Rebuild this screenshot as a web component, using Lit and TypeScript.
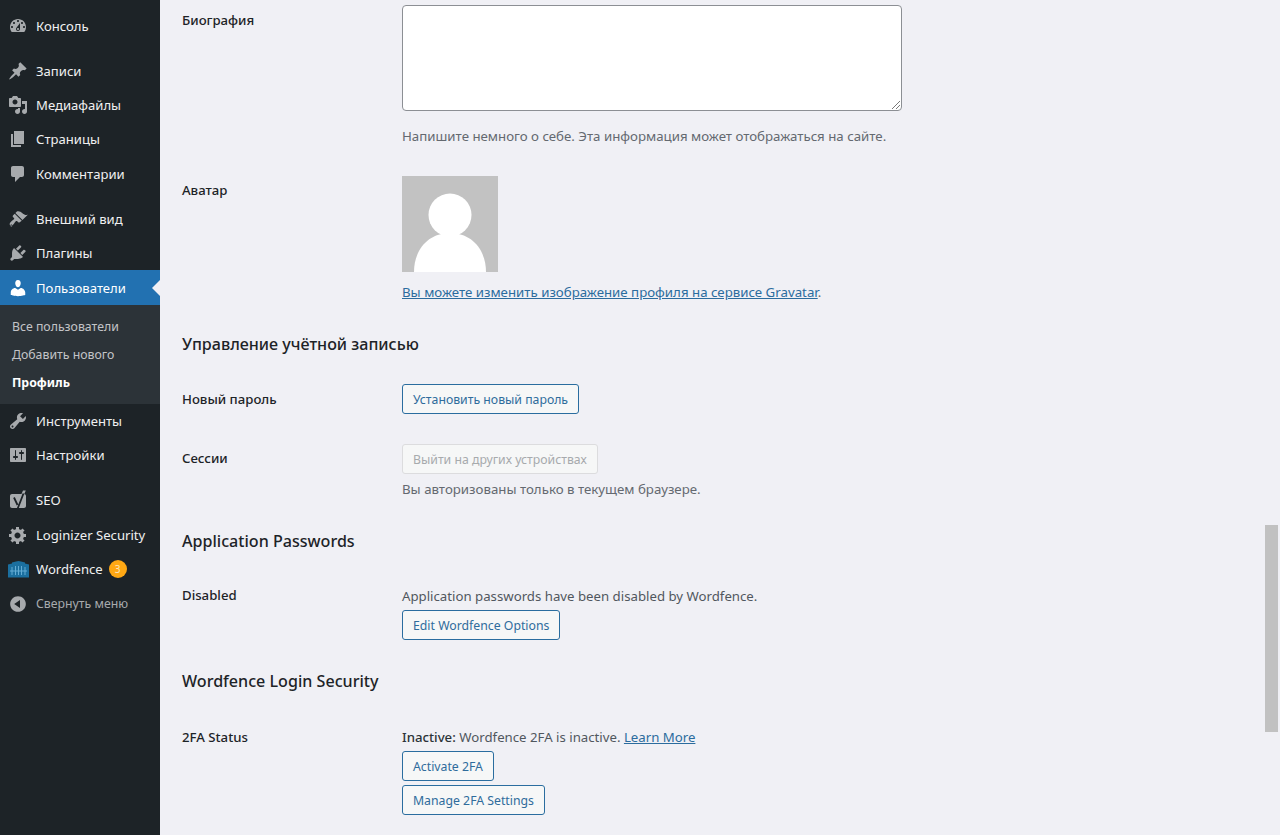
import { LitElement, html, css, svg } from "lit";
import { customElement } from "lit/decorators.js";

const ICONS: Record<string, any> = {
  dashboard: svg`<path d="M3.76 16h12.48c1.1-1.37 1.76-3.11 1.76-5 0-4.42-3.58-8-8-8s-8 3.58-8 8c0 1.89.66 3.63 1.76 5zM10 4c.55 0 1 .45 1 1s-.45 1-1 1-1-.45-1-1 .45-1 1-1zM6 6c.55 0 1 .45 1 1s-.45 1-1 1-1-.45-1-1 .45-1 1-1zm8 0c.55 0 1 .45 1 1s-.45 1-1 1-1-.45-1-1 .45-1 1-1zm-5.37 5.55L12 7v6c0 1.1-.9 2-2 2s-2-.9-2-2c0-.57.24-1.08.63-1.45zM4 10c.55 0 1 .45 1 1s-.45 1-1 1-1-.45-1-1 .45-1 1-1zm12 0c.55 0 1 .45 1 1s-.45 1-1 1-1-.45-1-1 .45-1 1-1zm-5 3c0-.55-.45-1-1-1s-1 .45-1 1 .45 1 1 1 1-.45 1-1z"/>`,
  post: svg`<path d="M10.44 3.02l1.82-1.82 6.36 6.35-1.83 1.82c-1.05-.68-2.48-.57-3.41.36l-.75.75c-.92.93-1.04 2.35-.35 3.41l-1.83 1.82-2.41-2.41-2.8 2.79c-.42.42-3.38 2.71-3.8 2.29s1.86-3.39 2.28-3.81l2.79-2.79L4.1 9.36l1.83-1.82c1.05.69 2.48.57 3.4-.36l.75-.75c.93-.92 1.05-2.35.36-3.41z"/>`,
  media: svg`<path d="M13 11V4c0-.55-.45-1-1-1h-1.67L9 1H5L3.67 3H2c-.55 0-1 .45-1 1v7c0 .55.45 1 1 1h10c.55 0 1-.45 1-1zM7 4.5c1.38 0 2.5 1.12 2.5 2.5S8.38 9.5 7 9.5 4.5 8.38 4.5 7 5.62 4.5 7 4.5zM14 6h5v10.5c0 1.38-1.12 2.5-2.5 2.5S14 17.88 14 16.5s1.12-2.5 2.5-2.5c.17 0 .34.02.5.05V9h-3V6zm-4 8.05V13h2v3.5c0 1.38-1.12 2.5-2.5 2.5S7 17.88 7 16.5 8.12 14 9.5 14c.17 0 .34.02.5.05z"/>`,
  page: svg`<path d="M6 15V2h10v13H6zm-1 1h8v2H3V5h2v11z"/>`,
  comments: svg`<path d="M5 2h9c1.1 0 2 .9 2 2v7c0 1.1-.9 2-2 2h-2l-5 5v-5H5c-1.1 0-2-.9-2-2V4c0-1.1.9-2 2-2z"/>`,
  appearance: svg`<path d="M14.48 11.06L7.41 3.99l1.5-1.5c.5-.56 2.3-.47 3.51.32 1.21.8 1.43 1.28 2.91 2.1 1.18.64 2.45 1.26 4.45.85zM13.77 11.77 6.7 4.7 4.93 6.47c-.39.39-.39 1.02 0 1.41l1.06 1.06c.39.39.39 1.03 0 1.42-.6.6-1.43 1.11-2.21 1.69-.35.26-.7.53-1.01.84-1.43 1.43-1.4 2.52-.71 3.21.69.69 1.78.72 3.21-.71.31-.31.58-.66.84-1.01.58-.78 1.09-1.61 1.69-2.21.39-.39 1.03-.39 1.42 0l1.06 1.06c.39.39 1.02.39 1.41 0zm-9.72 5.37c-.39.39-1.02.39-1.41 0-.39-.39-.39-1.03 0-1.42.39-.39 1.02-.39 1.41 0 .39.39.39 1.03 0 1.42z"/>`,
  plugins: svg`<path d="M13.11 4.36L9.87 7.6 8 5.73l3.24-3.24c.35-.34 1.05-.2 1.56.32.52.51.66 1.21.31 1.55zm-8 1.77l.91-1.12 9.01 9.01-1.19.84c-.71.71-2.63 1.16-3.82 1.16H6.14L4.9 17.26c-.59.59-1.54.59-2.12 0-.59-.58-.59-1.53 0-2.12l1.24-1.24v-3.88c0-1.13.4-3.19 1.09-3.89zm7.26 3.97l3.24-3.24c.34-.35 1.04-.21 1.55.31.52.51.66 1.21.31 1.55l-3.24 3.25z"/>`,
  users: svg`<path d="M10 9.25c-2.27 0-2.73-3.44-2.73-3.44C7 4.02 7.82 2 9.97 2c2.16 0 2.98 2.02 2.71 3.81 0 0-.41 3.44-2.68 3.44zm0 2.57L12.72 10c2.39 0 4.52 2.33 4.52 4.53v2.49s-3.65 1.13-7.24 1.13c-3.65 0-7.24-1.13-7.24-1.13v-2.49c0-2.25 1.94-4.48 4.47-4.48z"/>`,
  tools: svg`<path d="M16.68 9.77c-1.34 1.34-3.3 1.67-4.95.99l-5.41 6.52c-.99.99-2.59.99-3.58 0s-.99-2.59 0-3.57l6.52-5.42c-.68-1.65-.35-3.61.99-4.95 1.28-1.28 3.12-1.62 4.72-1.06l-2.89 2.89 2.82 2.82 2.86-2.87c.53 1.58.18 3.39-1.08 4.65zM3.81 16.21c.4.39 1.04.39 1.43 0 .4-.4.4-1.04 0-1.43-.39-.4-1.03-.4-1.43 0-.39.39-.39 1.03 0 1.43z"/>`,
  settings: svg`<path d="M18 16V4c0-.55-.45-1-1-1H3c-.55 0-1 .45-1 1v12c0 .55.45 1 1 1h14c.55 0 1-.45 1-1zM8 11h1c.55 0 1 .45 1 1s-.45 1-1 1H8v1.5c0 .28-.22.5-.5.5s-.5-.22-.5-.5V13H6c-.55 0-1-.45-1-1s.45-1 1-1h1V5.5c0-.28.22-.5.5-.5s.5.22.5.5V11zm5-2h-1c-.55 0-1-.45-1-1s.45-1 1-1h1V5.5c0-.28.22-.5.5-.5s.5.22.5.5V7h1c.55 0 1 .45 1 1s-.45 1-1 1h-1v5.5c0 .28-.22.5-.5.5s-.5-.22-.5-.5V9z"/>`,
  seo: svg`<path d="M4 4h12c1.100 0 2 .9 2 2v10c0 1.100-.9 2-2 2H4c-1.100 0-2-.9-2-2V6c0-1.100.9-2 2-2zM13.500 4 15 .5h2.800L16.300 4z"/>
    <path d="M6 7.500 9.500 15M15.500 3.500 9.500 19" stroke="#1d2327" stroke-width="1.800" fill="none"/>`,
  gear: svg`<path d="M18 12h-2.180c-.17.7-.44 1.350-.81 1.930l1.540 1.540-2.100 2.100-1.540-1.540c-.58.36-1.230.63-1.910.79V19H8v-2.180c-.68-.16-1.330-.43-1.910-.79l-1.540 1.540-2.120-2.120 1.540-1.540c-.36-.58-.63-1.230-.79-1.910H1V9.030h2.170c.16-.7.44-1.350.8-1.940L2.430 5.550l2.100-2.100 1.540 1.540c.58-.37 1.240-.64 1.930-.81V2h3v2.180c.68.16 1.330.43 1.910.79l1.540-1.540 2.120 2.120-1.540 1.540c.36.59.64 1.240.8 1.940H18V12zm-8.500 1.500c1.660 0 3-1.340 3-3s-1.340-3-3-3-3 1.340-3 3 1.340 3 3 3z"/>`,
  collapse: svg`<path d="M10 2.160c4.330 0 7.840 3.510 7.840 7.840s-3.510 7.840-7.840 7.840S2.160 14.330 2.160 10 5.710 2.160 10 2.160zm2 11.720V6.120L6.180 9.970z"/>`,
};

interface Item { label: string; icon: string; sep?: boolean; active?: boolean; cls?: string; badge?: string; }

const MENU: Item[] = [
  { label: "Консоль", icon: "dashboard", sep: true },
  { label: "Записи", icon: "post" },
  { label: "Медиафайлы", icon: "media" },
  { label: "Страницы", icon: "page" },
  { label: "Комментарии", icon: "comments", sep: true },
  { label: "Внешний вид", icon: "appearance" },
  { label: "Плагины", icon: "plugins" },
  { label: "Пользователи", icon: "users", active: true },
  { label: "Инструменты", icon: "tools" },
  { label: "Настройки", icon: "settings", sep: true },
  { label: "SEO", icon: "seo" },
  { label: "Loginizer Security", icon: "gear" },
  { label: "Wordfence", icon: "wordfence", badge: "3" },
  { label: "Свернуть меню", icon: "collapse", cls: "collapse" },
];

@customElement("app-root")
export class AppRoot extends LitElement {
  static styles = css`
    :host {
      display: block;
      height: 835px;
      overflow: hidden;
      background: #f0f0f5;
      font-family: "Noto Sans", "Open Sans", sans-serif;
      font-size: 13px;
      color: #3c434a;
    }
    .page { display: flex; height: 835px; position: relative; }
    .side { width: 160px; flex: none; background: #1d2327; padding-top: 8.4px; box-sizing: border-box; }
    .item {
      height: 34.4px; display: flex; align-items: center; color: #f0f0f1;
      padding-left: 8px; position: relative; font-size: 13.1px; box-sizing: border-box;
    }
    .item svg { width: 20px; height: 20px; fill: #a7aaad; flex: none; margin-right: 8px; }
    .item svg.wf { fill: #1b6f9f; width: 21px; margin-left: 0; margin-right: 7px; }
    .item.sep { margin-bottom: 10.6px; }
    .item.active { background: #2271b1; color: #fff; }
    .item.active svg { fill: #fff; }
    .item.active::after {
      content: ""; position: absolute; right: 0; top: 50%; margin-top: -8px;
      border: 8px solid transparent; border-right-color: #f0f0f5; border-left-width: 0;
    }
    .item.collapse { color: #a7aaad; font-size: 12.3px; }
    .badge {
      width: 18px; height: 18px; border-radius: 50%; background: #ffa814; color: #fbe6bd;
      font-size: 10px; display: flex; align-items: center; justify-content: center; margin-left: 6px;
    }
    .sub { background: #2c3338; padding: 8px 0 7px; height: 99.2px; box-sizing: border-box; }
    .sub div { height: 28px; line-height: 28px; padding-left: 12px; font-size: 12.3px; color: #c3c4c7; }
    .sub div.cur { color: #fff; font-weight: 700; }

    .main { flex: 1; padding: 5px 0 0 22px; min-width: 0; }
    .row { display: flex; }
    .label { width: 220px; flex: none; font-weight: 500; font-size: 13.2px; color: #1d2327; }
    .desc { color: #646970; line-height: 18px; font-size: 13.27px; }
    .bio { padding-bottom: 31px; }
    .bio .label { padding-top: 6px; line-height: 18px; }
    .ta {
      width: 500px; height: 106px; box-sizing: border-box; background: #fff;
      border: 1px solid #8c8f94; border-radius: 4px; position: relative; margin-bottom: 16px;
    }
    .grip { position: absolute; right: 0; bottom: 0; width: 11px; height: 11px; }
    .avatar-row { height: 131px; }
    .avatar-row .label { padding-top: 5px; line-height: 18px; }
    .avatar { display: block; width: 96px; height: 96px; margin-bottom: 11px; }
    a { color: #2b6c9e; text-decoration: underline; }
    h2 { font-size: 16.1px; font-weight: 500; color: #1d2327; margin: 0; line-height: 22px; }
    .btn {
      display: inline-flex; align-items: center; height: 30px; box-sizing: border-box; padding: 0 10px;
      border: 1px solid #2a6d9f; border-radius: 3px; color: #2f6c9c; background: #f6f7f7; font-size: 12.28px; white-space: nowrap;
    }
    .btn.off { border-color: #dcdcde; color: #a7aaad; background: #f6f7f7; }
    .stack { display: flex; flex-direction: column; align-items: flex-start; }
    .h-acc { margin-top: 26px; }
    .r-pass { margin-top: 29px; align-items: center; height: 30px; }
    .r-sess { margin-top: 30px; }
    .r-sess .label { padding-top: 5px; line-height: 18px; }
    .r-sess .desc { margin-top: 6px; }
    .h-app { margin-top: 32px; }
    .r-app { margin-top: 34px; }
    .r-app .label, .r-2fa .label { line-height: 18px; }
    .plain { line-height: 18px; margin-bottom: 5px; color: #50575e; font-size: 13.22px; }
    .r-app .plain { padding-top: 1px; }
    .h-wf { margin-top: 30px; }
    .r-2fa { margin-top: 36px; }
    .r-2fa .btn + .btn { margin-top: 4px; }
    .plain b { font-weight: 500; color: #2c3338; }

    .thumb { position: absolute; right: 2px; top: 525px; width: 13px; height: 207px; background: #c1c1c1; }
  `;

  icon(name: string) {
    if (name === "wordfence") {
      return html`<svg class="wf" viewBox="0 0 21 20">
        <path d="M0 5.500 4 4.500V3.500L8 2.500l2.500-.5 2.500.5 4 1v1l4 1V18.500H0z"/>
        <path fill="#7cc0e6" fill-opacity=".75" d="M3.500 8h1v8h-1zM7 7h1v9H7zM10 7h1v9h-1zM13 7h1v9h-1zM16.500 8h1v8h-1zM2 11.500h17v1H2z"/>
      </svg>`;
    }
    return html`<svg viewBox="0 0 20 20">${ICONS[name]}</svg>`;
  }

  renderItem(m: Item) {
    const cls = ["item", m.sep ? "sep" : "", m.active ? "active" : "", m.cls ?? ""].join(" ");
    return html`<div class=${cls}>
      ${this.icon(m.icon)}<span>${m.label}</span>
      ${m.badge ? html`<span class="badge">${m.badge}</span>` : ""}
    </div>
    ${m.active
      ? html`<div class="sub">
          <div>Все пользователи</div>
          <div>Добавить нового</div>
          <div class="cur">Профиль</div>
        </div>`
      : ""}`;
  }

  render() {
    return html`<div class="page">
      <nav class="side">${MENU.map((m) => this.renderItem(m))}</nav>
      <main class="main">
        <div class="row bio">
          <div class="label">Биография</div>
          <div>
            <div class="ta">
              <svg class="grip" viewBox="0 0 11 11"><path d="M2 10 10 2M6 10l4-4" stroke="#7a7a7a" stroke-width="1" fill="none"/></svg>
            </div>
            <div class="desc">Напишите немного о себе. Эта информация может отображаться на сайте.</div>
          </div>
        </div>
        <div class="row avatar-row">
          <div class="label">Аватар</div>
          <div>
            <svg class="avatar" viewBox="0 0 96 96">
              <rect width="96" height="96" fill="#c2c2c2"/>
              <circle cx="48" cy="39" r="21.500" fill="#fff"/>
              <path d="M12 96c0-22 14-39 36-39s36 17 36 39z" fill="#fff"/>
            </svg>
            <div class="desc"><a href="#">Вы можете изменить изображение профиля на сервисе Gravatar</a>.</div>
          </div>
        </div>
        <h2 class="h-acc">Управление учётной записью</h2>
        <div class="row r-pass">
          <div class="label">Новый пароль</div>
          <span class="btn">Установить новый пароль</span>
        </div>
        <div class="row r-sess">
          <div class="label">Сессии</div>
          <div class="stack">
            <span class="btn off">Выйти на других устройствах</span>
            <div class="desc">Вы авторизованы только в текущем браузере.</div>
          </div>
        </div>
        <h2 class="h-app">Application Passwords</h2>
        <div class="row r-app">
          <div class="label">Disabled</div>
          <div class="stack">
            <div class="plain">Application passwords have been disabled by Wordfence.</div>
            <span class="btn">Edit Wordfence Options</span>
          </div>
        </div>
        <h2 class="h-wf">Wordfence Login Security</h2>
        <div class="row r-2fa">
          <div class="label">2FA Status</div>
          <div class="stack">
            <div class="plain"><b>Inactive:</b> Wordfence 2FA is inactive. <a href="#">Learn More</a></div>
            <span class="btn">Activate 2FA</span>
            <span class="btn">Manage 2FA Settings</span>
          </div>
        </div>
      </main>
      <div class="thumb"></div>
    </div>`;
  }
}
